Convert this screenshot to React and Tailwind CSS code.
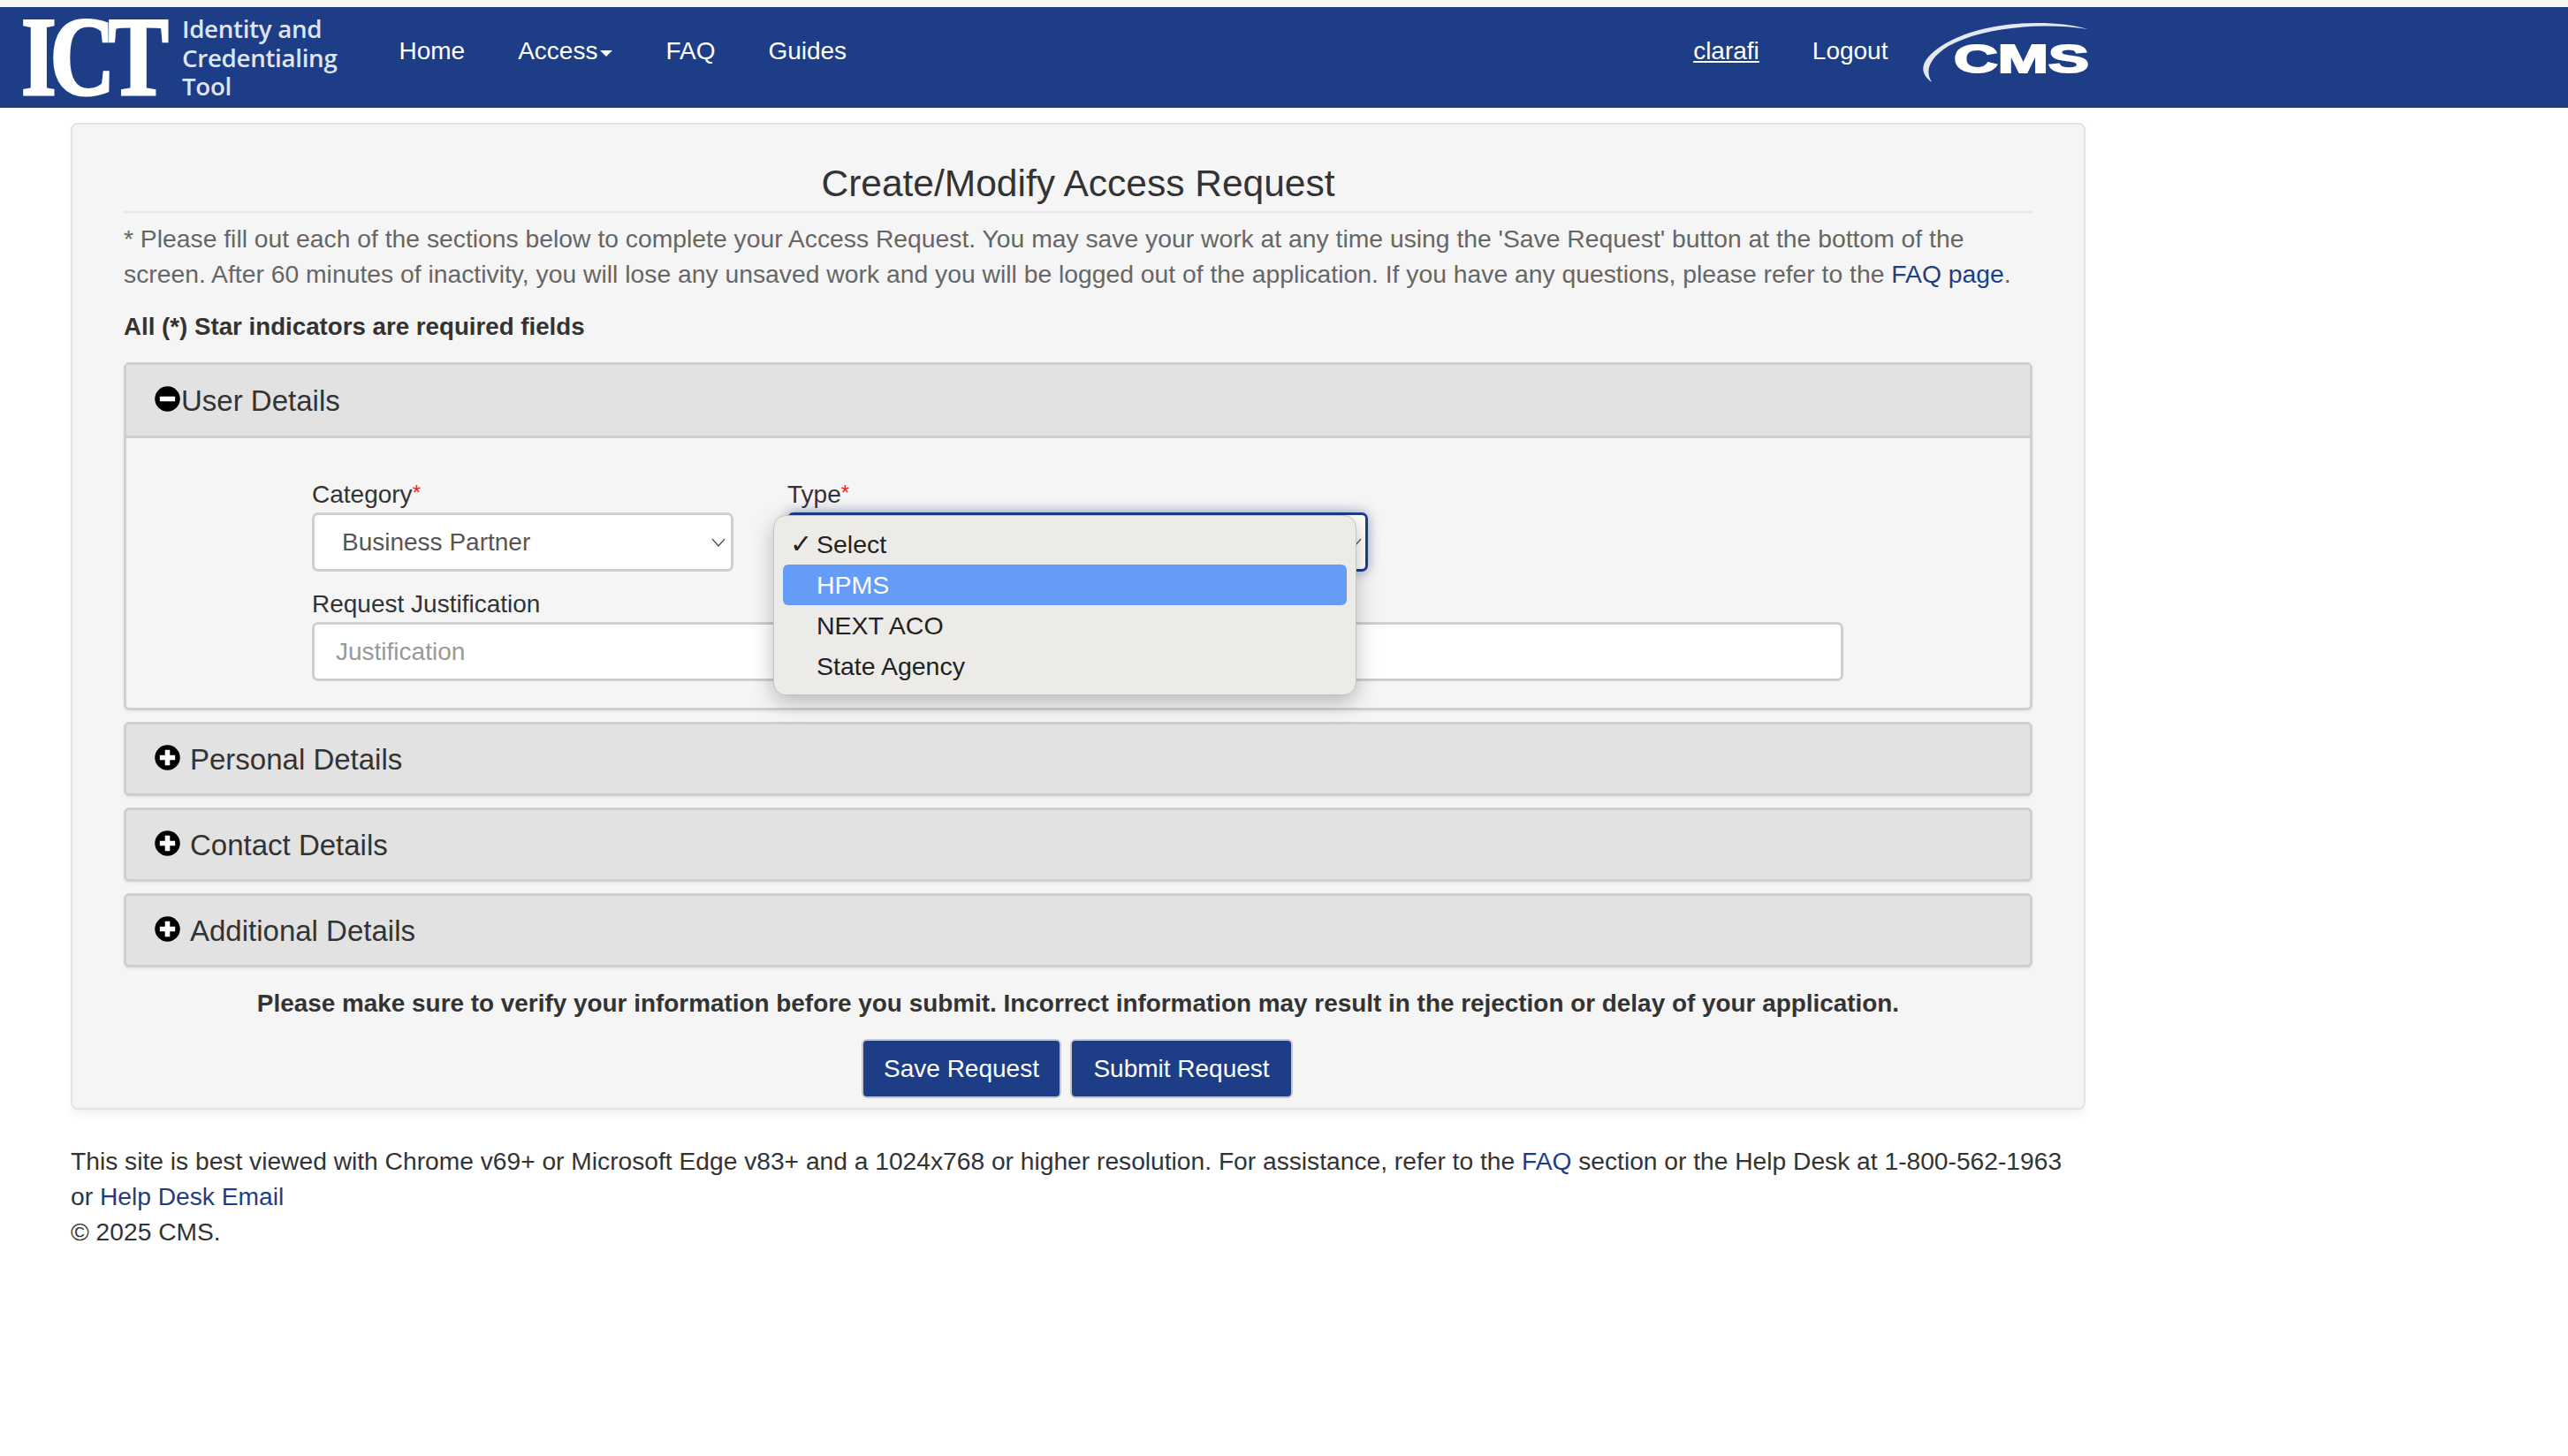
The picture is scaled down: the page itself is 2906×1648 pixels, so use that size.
const DISC = "M50 4a46 46 0 1 0 0 92a46 46 0 0 0 0-92z";

function CircleIcon({ plus }) {
  return (
    <svg viewBox="0 0 100 100" className="w-[31px] h-[31px] shrink-0 -mt-[3px]">
      <path d={DISC} fill="#000" />
      {plus ? (
        <path d="M41 22h18v19h19v18H59v19H41V59H22V41h19z" fill="#fff" />
      ) : (
        <rect x="22" y="41" width="56" height="18" rx="2" fill="#fff" />
      )}
    </svg>
  );
}

function Chevron() {
  return (
    <svg viewBox="0 0 16 10" className="w-4 h-[10px]" fill="none" stroke="#555" strokeWidth="1.4">
      <path d="M1 1l7 8 7-8" />
    </svg>
  );
}

function IctLogo() {
  return (
    <div className="flex items-center h-[90px]">
      <div className="flex items-center w-[174px]">
        <span className="font-['Liberation_Serif',serif] font-bold text-white text-[126px] leading-[88px] tracking-[-9px] scale-x-[0.81] origin-left whitespace-nowrap [-webkit-text-stroke:3px_white]">
          ICT
        </span>
      </div>
      <div className="ml-2 font-['Open_Sans',sans-serif] font-semibold text-[27.7px] leading-[32.5px] text-[#dfe4ee] tracking-[-0.3px]">
        Identity and
        <br />
        Credentialing
        <br />
        Tool
      </div>
    </div>
  );
}

function CmsLogo() {
  return (
    <svg viewBox="0 0 196 72" className="w-[196px] h-[72px] ml-[33px]">
      <path d="M194 11C150-2 70 2 28 30C8 43-1 58 17 71C9 58 14 44 36 30C74 9 140 3 194 11z" fill="#e3e8f1" />
      <path d="M172 9C120 7 66 14 34 34C20 44 15 54 24 66C21 54 28 44 42 34C72 17 125 11 172 9z" fill="#1d3e87" />
      <text
        x="42"
        y="60"
        textLength="153"
        lengthAdjust="spacingAndGlyphs"
        fontFamily="'Liberation Sans', sans-serif"
        fontWeight="700"
        fontSize="44"
        stroke="#fff"
        strokeWidth="2"
        fill="#fff"
      >
        CMS
      </text>
    </svg>
  );
}

function Header() {
  return (
    <div>
      <div className="h-2 bg-[#f5f8f0]"></div>
      <nav className="h-[114px] bg-[#1d3e87] flex items-center text-white text-[28px]">
        <div className="ml-[24px]">
          <IctLogo />
        </div>
        <div className="flex ml-[40px] -mt-[14px]">
          <a className="px-[30px]">Home</a>
          <a className="px-[30px] flex items-center">
            Access
            <span className="ml-[3px] mt-[5px] border-x-[7px] border-t-[7px] border-x-transparent border-t-white"></span>
          </a>
          <a className="px-[30px]">FAQ</a>
          <a className="px-[30px]">Guides</a>
        </div>
        <div className="flex items-center ml-[928px] -mt-[14px]">
          <a className="underline">clarafi</a>
          <a className="ml-[60px]">Logout</a>
          <CmsLogo />
        </div>
      </nav>
    </div>
  );
}

function Panel({ title }) {
  return (
    <div className="h-[84px] rounded-[6px] border-[3px] border-[#cfcfcf] bg-[#e2e2e2] flex items-center pl-[31px] shadow-[0_2px_3px_rgba(0,0,0,0.06)]">
      <CircleIcon plus />
      <span className="ml-[10px] mt-[2px] text-[33px] text-[#333]">{title}</span>
    </div>
  );
}

function TypeSelect() {
  return (
    <div className="relative w-[657px] h-[67px] rounded-[7px] border-[3px] border-[#1d3e87] bg-white shadow-[0_0_14px_rgba(29,62,135,0.45)] flex items-center justify-end pr-1">
      <Chevron />
      {/* native select popup */}
      <div className="absolute left-[-19px] top-0 w-[660px] h-[204px] rounded-[14px] border border-[#c4c4c0] bg-[#ecebe8] shadow-[0_8px_24px_rgba(0,0,0,0.25)] pt-[9px] px-[10px] text-[28.5px] text-[#222]">
        <div className="h-[46px] flex items-center relative pl-[38px] leading-none">
          <span className="absolute left-[8px] text-[30px] font-bold font-['DejaVu_Sans',sans-serif]">✓</span>
          Select
        </div>
        <div className="h-[46px] flex items-center pl-[38px] rounded-[6px] bg-[#659cf8] text-white leading-none">HPMS</div>
        <div className="h-[46px] flex items-center pl-[38px] leading-none">NEXT ACO</div>
        <div className="h-[46px] flex items-center pl-[38px] leading-none">State Agency</div>
      </div>
    </div>
  );
}

function UserDetails() {
  return (
    <div className="rounded-[6px] border-[3px] border-[#cfcfcf] shadow-[0_2px_3px_rgba(0,0,0,0.06)]">
      <div className="h-[83px] bg-[#e2e2e2] border-b-[3px] border-[#cfcfcf] flex items-center pl-[31px]">
        <CircleIcon />
        <span className="mt-[2px] text-[33px] text-[#333]">User Details</span>
      </div>
      <div className="h-[305px] pl-[210px] pt-[42px]">
        <div className="flex gap-[61px]">
          <div>
            <label className="block text-[28px] leading-10 text-[#333]">
              Category<span className="text-[#e8251f] align-[3px] text-[24px]">*</span>
            </label>
            <div className="w-[477px] h-[67px] rounded-[7px] border-[3px] border-[#cfcfcf] bg-white flex items-center justify-between pl-[31px] pr-[6px] text-[28px] text-[#555]">
              Business Partner
              <Chevron />
            </div>
          </div>
          <div>
            <label className="block text-[28px] leading-10 text-[#333]">
              Type<span className="text-[#e8251f] align-[3px] text-[24px]">*</span>
            </label>
            <TypeSelect />
          </div>
        </div>
        <label className="block mt-[17px] text-[28px] leading-10 text-[#333]">Request Justification</label>
        <input
          placeholder="Justification"
          className="block w-[1733px] h-[67px] rounded-[7px] border-[3px] border-[#cfcfcf] bg-white pl-[24px] text-[28px] placeholder:text-[#999] outline-none"
        />
      </div>
    </div>
  );
}

export default function App() {
  return (
    <div className="min-h-[1648px] bg-white font-['Liberation_Sans',sans-serif] text-[#333]">
      <Header />
      <div className="ml-[80px] mt-[17px] w-[2280px] h-[1117px] rounded-[8px] border-2 border-[#e3e3e3] bg-[#f5f5f5] shadow-[0_6px_8px_rgba(0,0,0,0.05)] px-[58px]">
        <h2 className="pt-[42px] pb-[6px] text-center text-[42.5px] leading-[50px] border-b-2 border-[#e6e6e6]">
          Create/Modify Access Request
        </h2>
        <p className="mt-[9px] text-[28.3px] leading-10 text-[#666]">
          * Please fill out each of the sections below to complete your Access Request. You may save your work at any time using the 'Save Request' button at the bottom of the screen. After 60 minutes of inactivity, you will lose any unsaved work and you will be logged out of the application. If you have any questions, please refer to the <a className="text-[#1d3e87]">FAQ page</a>.
        </p>
        <p className="mt-[20px] text-[27.7px] leading-10 font-bold">All (*) Star indicators are required fields</p>
        <div className="mt-[20px] flex flex-col gap-[13px]">
          <UserDetails />
          <Panel title="Personal Details" />
          <Panel title="Contact Details" />
          <Panel title="Additional Details" />
        </div>
        <p className="mt-[21px] text-center text-[27.9px] leading-10 font-bold">
          Please make sure to verify your information before you submit. Incorrect information may result in the rejection or delay of your application.
        </p>
        <div className="mt-[20px] flex justify-center gap-[10px] pr-[2px] text-[28px] text-white">
          <button className="h-[67px] w-[226px] rounded-[6px] border-2 border-[#c8c8c8] bg-[#1d3e87]">Save Request</button>
          <button className="h-[67px] w-[252px] rounded-[6px] border-2 border-[#c8c8c8] bg-[#1d3e87]">Submit Request</button>
        </div>
      </div>
      <div className="ml-[80px] mt-[38px] w-[2280px] text-[28.2px] leading-10 text-[#333]">
        This site is best viewed with Chrome v69+ or Microsoft Edge v83+ and a 1024x768 or higher resolution. For assistance, refer to the <a className="text-[#1d3e87]">FAQ</a> section or the Help Desk at 1-800-562-1963 or <a className="text-[#1d3e87]">Help Desk Email</a>
        <br />© 2025 CMS.
      </div>
    </div>
  );
}
